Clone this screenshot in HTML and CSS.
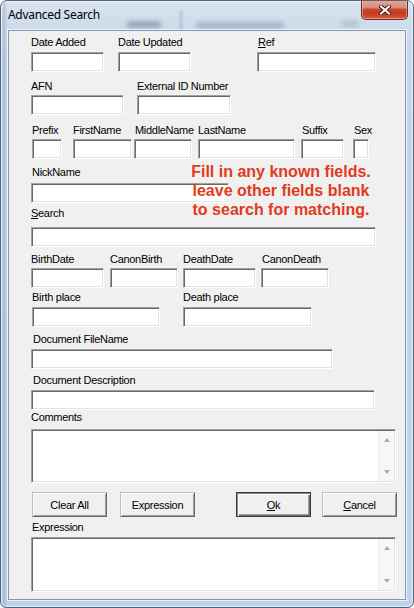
FILE: index.html
```html
<!DOCTYPE html>
<html>
<head>
<meta charset="utf-8">
<link rel="stylesheet" href="styles.css">
</head>
<body>
<div class="window">
  <div class="titlebar">
    <div class="glass">
      <span class="blob b1"></span>
      <span class="blob-sep"></span>
      <span class="blob b2"></span>
      <span class="blob b3"></span>
    </div>
    <span class="title">Advanced Search</span>
    <button class="close" aria-label="Close">
      <svg width="12" height="10" viewBox="0 0 12 10">
        <path d="M2 1.5 L10 8.5 M10 1.5 L2 8.5" stroke="#3d1812" stroke-width="4" stroke-linecap="square" fill="none"/>
        <path d="M2 1.5 L10 8.5 M10 1.5 L2 8.5" stroke="#ffffff" stroke-width="2" stroke-linecap="square" fill="none"/>
      </svg>
    </button>
  </div>

  <div class="client">
    <div class="note">Fill in any known fields.<br>leave other fields blank<br>to search for matching.</div>

    <div class="row r1">
      <div class="fld w-date"><span class="lbl">Date Added</span><input class="box"></div>
      <div class="fld w-date ml-14"><span class="lbl">Date Updated</span><input class="box"></div>
      <div class="fld w-ref ml-66"><span class="lbl lbl-in1"><u>R</u>ef</span><input class="box"></div>
    </div>

    <div class="row r2">
      <div class="fld w-afn"><span class="lbl">AFN</span><input class="box"></div>
      <div class="fld w-ext ml-13"><span class="lbl">External ID Number</span><input class="box"></div>
    </div>

    <div class="row r3">
      <div class="fld w-prefix ml-1"><span class="lbl">Prefix</span><input class="box"></div>
      <div class="fld w-first ml-11"><span class="lbl">FirstName</span><input class="box"></div>
      <div class="fld w-middle ml-2"><span class="lbl lbl-in1">MiddleName</span><input class="box"></div>
      <div class="fld w-last ml-6"><span class="lbl">LastName</span><input class="box"></div>
      <div class="fld w-suffix ml-6"><span class="lbl lbl-in1">Suffix</span><input class="box"></div>
      <div class="fld w-sex ml-9"><span class="lbl lbl-in1">Sex</span><input class="box"></div>
    </div>

    <div class="row r4">
      <div class="fld w-nick"><span class="lbl lbl-in1">NickName</span><input class="box"></div>
    </div>

    <div class="row r5">
      <div class="fld w-search"><span class="lbl"><u>S</u>earch</span><input class="box"></div>
    </div>

    <div class="row r6">
      <div class="fld w-date"><span class="lbl">BirthDate</span><input class="box"></div>
      <div class="fld w-canon ml-6"><span class="lbl">CanonBirth</span><input class="box"></div>
      <div class="fld w-date ml-5"><span class="lbl">DeathDate</span><input class="box"></div>
      <div class="fld w-canon ml-5"><span class="lbl lbl-in1">CanonDeath</span><input class="box"></div>
    </div>

    <div class="row r7">
      <div class="fld w-bplace ml-1"><span class="lbl">Birth place</span><input class="box"></div>
      <div class="fld w-dplace ml-23"><span class="lbl">Death place</span><input class="box"></div>
    </div>

    <div class="row r8">
      <div class="fld w-docfile"><span class="lbl lbl-in2">Document FileName</span><input class="box"></div>
    </div>

    <div class="row r9">
      <div class="fld w-docdesc"><span class="lbl lbl-in2">Document Description</span><input class="box"></div>
    </div>

    <div class="row r10">
      <div class="fld w-memo">
        <span class="lbl">Comments</span>
        <div class="box memo memo-c">
          <div class="sb"><span class="arr up"></span><span class="arr down"></span></div>
        </div>
      </div>
    </div>

    <div class="row buttons">
      <button class="btn ml-1">Clear All</button>
      <button class="btn ml-13">Expression</button>
      <button class="btn default ml-41"><u>O</u>k</button>
      <button class="btn ml-11"><u>C</u>ancel</button>
    </div>

    <div class="row r11">
      <div class="fld w-memo">
        <span class="lbl lbl-in1">Expression</span>
        <div class="box memo memo-e">
          <div class="sb"><span class="arr up"></span><span class="arr down"></span></div>
        </div>
      </div>
    </div>
  </div>
</div>
</body>
</html>
```

FILE: styles.css
```css
* { box-sizing: border-box; }
html, body { margin: 0; padding: 0; }
body {
  width: 414px;
  height: 608px;
  overflow: hidden;
  background: #ffffff;
  font-family: "Liberation Sans", Arial, sans-serif;
}

.window {
  position: relative;
  width: 414px;
  height: 608px;
  border: 1px solid #52657d;
  border-radius: 7px 7px 6px 6px;
  background:
    linear-gradient(90deg, rgba(120, 145, 175, 0) 0px, rgba(120, 145, 175, 0.35) 3px, rgba(120, 145, 175, 0) 6px) left top / 8px 100% no-repeat,
    linear-gradient(180deg, #d9e4f0 0px, #cfdceb 22px, #c3d6eb 60px, #bed3ea 100%);
  box-shadow: inset 0 0 0 1px rgba(255, 255, 255, 0.6);
  display: flex;
  flex-direction: column;
  overflow: hidden;
}

/* ---------- title bar ---------- */
.titlebar {
  position: relative;
  height: 29px;
  flex: none;
  display: flex;
  align-items: flex-start;
  padding: 0 5px 0 7px;
}
.glass {
  position: absolute;
  inset: 0;
  pointer-events: none;
  overflow: hidden;
}
.blob {
  position: absolute;
  height: 7px;
  border-radius: 3px;
  background: #55657a;
  filter: blur(2px);
}
.b1 { left: 126px; top: 20px; width: 34px; opacity: 0.45; }
.b2 { left: 195px; top: 21px; width: 88px; opacity: 0.3; }
.b3 { left: 340px; top: 19px; width: 18px; opacity: 0.2; }
.blob-sep {
  position: absolute;
  left: 179px;
  top: 10px;
  width: 2px;
  height: 20px;
  background: #6e7c8e;
  filter: blur(1px);
  opacity: 0.35;
}
.title {
  position: relative;
  padding-top: 6px;
  font-family: "Noto Sans", "Liberation Sans", sans-serif;
  font-size: 12px;
  line-height: 16px;
  color: #000;
  letter-spacing: -0.3px;
}
.close {
  position: relative;
  margin-left: auto;
  width: 47px;
  height: 20px;
  margin-top: -1px;
  padding: 0;
  border: 1px solid #6a2c22;
  border-top: none;
  border-radius: 0 0 5px 5px;
  background: linear-gradient(180deg, #e7aa9c 0%, #d98a77 40%, #c7472f 50%, #c23a22 70%, #da5a3a 100%);
  box-shadow: inset 0 0 0 1px rgba(255, 225, 215, 0.45);
  display: flex;
  align-items: center;
  justify-content: center;
}
.close svg { display: block; margin-top: 1px; }

/* ---------- client area ---------- */
.client {
  position: relative;
  flex: 1;
  margin: 0 7px 7px 7px;
  background: #f0f0f0;
  border: 1px solid #8497ae;
  box-shadow: 0 0 0 1px rgba(255, 255, 255, 0.7);
}

.note {
  position: absolute;
  left: 172px;
  top: 131px;
  width: 200px;
  text-align: center;
  font-size: 16px;
  line-height: 19px;
  font-weight: bold;
  color: #e23a20;
  white-space: nowrap;
  z-index: 2;
}

.row {
  display: flex;
  align-items: flex-start;
  padding-left: 22px;
}
.fld {
  display: flex;
  flex-direction: column;
}
.lbl {
  display: block;
  height: 13px;
  font-size: 11px;
  line-height: 13px;
  color: #000;
  white-space: nowrap;
  letter-spacing: -0.3px;
}
.lbl u { text-decoration-thickness: 1px; text-underline-offset: 1px; }
.lbl-in1 { padding-left: 1px; }
.lbl-in2 { padding-left: 2px; }

.box {
  display: block;
  width: 100%;
  height: 20px;
  margin: 0;
  padding: 0;
  background: #ffffff;
  border: 1px solid;
  border-color: #a0a0a0 #ffffff #ffffff #a0a0a0;
  box-shadow: inset 1px 1px 0 #696969, inset -1px -1px 0 #e3e3e3;
  outline: none;
  font: inherit;
}

/* row vertical rhythm */
.r1 { margin-top: 5px; }
.r1 .lbl { margin-bottom: 3px; }
.r2 { margin-top: 8px; }
.r2 .lbl { margin-bottom: 2px; }
.r3 { margin-top: 9px; }
.r3 .lbl { margin-bottom: 2px; }
.r4 { margin-top: 7px; }
.r4 .lbl { margin-bottom: 4px; }
.r5 { margin-top: 4px; }
.r5 .lbl { margin-bottom: 7px; }
.r6 { margin-top: 6px; }
.r6 .lbl { margin-bottom: 2px; }
.r7 { margin-top: 3px; }
.r7 .lbl { margin-bottom: 3px; }
.r8 { margin-top: 6px; }
.r8 .lbl { margin-bottom: 3px; }
.r9 { margin-top: 5px; }
.r9 .lbl { margin-bottom: 3px; }
.r10 { margin-top: 1px; }
.r10 .lbl { margin-bottom: 5px; }
.buttons { margin-top: 9px; }
.r11 { margin-top: 4px; }
.r11 .lbl { margin-bottom: 3px; }

/* widths */
.w-date { width: 73px; }
.w-ref { width: 119px; }
.w-afn { width: 93px; }
.w-ext { width: 94px; }
.w-prefix { width: 30px; }
.w-first { width: 59px; }
.w-middle { width: 58px; }
.w-last { width: 97px; }
.w-suffix { width: 43px; }
.w-sex { width: 16px; }
.w-nick { width: 198px; }
.w-search { width: 345px; }
.w-canon { width: 68px; }
.w-bplace { width: 128px; }
.w-dplace { width: 129px; }
.w-docfile { width: 302px; }
.w-docdesc { width: 344px; }
.w-memo { width: 365px; }

/* horizontal gaps */
.ml-1 { margin-left: 1px; }
.ml-2 { margin-left: 2px; }
.ml-5 { margin-left: 5px; }
.ml-6 { margin-left: 6px; }
.ml-9 { margin-left: 9px; }
.ml-11 { margin-left: 11px; }
.ml-13 { margin-left: 13px; }
.ml-14 { margin-left: 14px; }
.ml-23 { margin-left: 23px; }
.ml-41 { margin-left: 41px; }
.ml-66 { margin-left: 66px; }

/* memo boxes */
.memo {
  display: flex;
  justify-content: flex-end;
  padding: 1px;
}
.memo-c { height: 54px; }
.memo-e { height: 55px; }
.sb {
  width: 16px;
  height: 100%;
  background: #f7f7f7;
  border-left: 1px solid #ececec;
  display: flex;
  flex-direction: column;
  justify-content: space-between;
  align-items: center;
  padding: 7px 0 7px 0;
}
.arr {
  width: 0;
  height: 0;
  border-left: 3.5px solid transparent;
  border-right: 3.5px solid transparent;
}
.arr.up { border-bottom: 4px solid #a9a9a9; }
.arr.down { border-top: 4px solid #a9a9a9; }

/* buttons */
.btn {
  width: 75px;
  height: 25px;
  margin-top: 0;
  padding: 0;
  font-family: "Liberation Sans", Arial, sans-serif;
  font-size: 11px;
  letter-spacing: -0.3px;
  color: #000;
  background: #f0f0f0;
  border: 1px solid;
  border-color: #bdbdbd #696969 #696969 #bdbdbd;
  box-shadow: inset 1px 1px 0 #ffffff, inset -1px -1px 0 #a0a0a0;
}
.btn u { text-underline-offset: 1px; }
.btn.default {
  border: 1px solid #3a3a3a;
  box-shadow: inset 1px 1px 0 #8a8a8a, inset 2px 2px 0 #ffffff, inset -1px -1px 0 #696969, inset -2px -2px 0 #a0a0a0;
}
```
